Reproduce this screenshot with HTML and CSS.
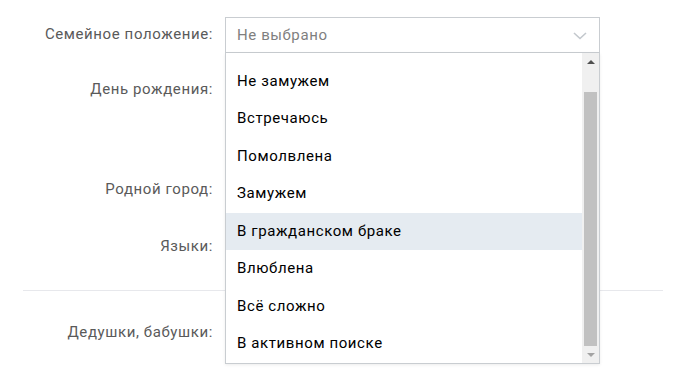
FILE: index.html
```html
<!DOCTYPE html>
<html lang="ru">
<head>
<meta charset="utf-8">
<link rel="stylesheet" href="styles.css">
</head>
<body>
<div class="form">
  <div class="row row-status">
    <div class="label">Семейное положение:</div>
    <div class="field">
      <div class="select">
        <span class="placeholder">Не выбрано</span>
        <svg class="chevron" width="14" height="8" viewBox="0 0 14 8"><path d="M1 1 L7 6.5 L13 1" fill="none" stroke="#c3c8cd" stroke-width="1.6"/></svg>
      </div>
      <div class="dropdown">
        <ul class="options">
          <li>Не замужем</li>
          <li>Встречаюсь</li>
          <li>Помолвлена</li>
          <li>Замужем</li>
          <li class="active">В гражданском браке</li>
          <li>Влюблена</li>
          <li>Всё сложно</li>
          <li>В активном поиске</li>
        </ul>
        <div class="scrollbar">
          <div class="sb-btn"><span class="tri up"></span></div>
          <div class="sb-track"><div class="sb-thumb"></div></div>
          <div class="sb-btn"><span class="tri down"></span></div>
        </div>
      </div>
    </div>
  </div>
  <div class="row row-birth">
    <div class="label">День рождения:</div>
  </div>
  <div class="row row-city">
    <div class="label">Родной город:</div>
  </div>
  <div class="row row-lang">
    <div class="label">Языки:</div>
  </div>
  <div class="divider"></div>
  <div class="row row-family">
    <div class="label">Дедушки, бабушки:</div>
  </div>
</div>
</body>
</html>
```
FILE: styles.css
```css
html, body {
  margin: 0;
  padding: 0;
  background: #fff;
}
body {
  font-family: Roboto, "Liberation Sans", sans-serif;
  font-size: 15px;
  letter-spacing: 0.6px;
  width: 679px;
  height: 371px;
  overflow: hidden;
}
.form {
  padding: 17px 16px 0 23px;
}
.row {
  display: flex;
  align-items: flex-start;
  gap: 12px;
}
.label {
  width: 190px;
  flex: none;
  text-align: right;
  color: #5a5a5a;
  line-height: 35px;
  height: 36px;
}
.field {
  position: relative;
  width: 375px;
}
.select {
  box-sizing: border-box;
  height: 36px;
  border: 1px solid #c9cdd1;
  display: flex;
  align-items: center;
  justify-content: space-between;
  padding: 0 12px 0 11px;
}
.placeholder {
  color: #7f7f7f;
  margin-top: -1px;
}
.chevron {
  display: block;
  margin-top: 1px;
}
.dropdown {
  position: absolute;
  top: 36px;
  left: 0;
  width: 375px;
  height: 311px;
  box-sizing: border-box;
  border: 1px solid #c9cdd1;
  border-top: none;
  background: #fff;
  display: flex;
  box-shadow: 0 1px 3px rgba(0, 0, 0, 0.08);
  z-index: 5;
}
.options {
  list-style: none;
  margin: 0;
  padding: 9.5px 0 0 0;
  flex: 1;
  overflow: hidden;
}
.options li {
  height: 37.5px;
  line-height: 37px;
  padding-left: 11px;
  color: #000;
}
.options li.active {
  background: #e5ebf1;
}
.scrollbar {
  width: 17px;
  flex: none;
  background: #f0f0f0;
  display: flex;
  flex-direction: column;
}
.sb-btn {
  height: 17px;
  flex: none;
  display: flex;
  align-items: center;
  justify-content: center;
}
.sb-track {
  flex: 1;
  display: flex;
  flex-direction: column;
  justify-content: flex-end;
}
.sb-thumb {
  height: 254px;
  margin: 0 2px;
  background: #c1c1c1;
}
.tri {
  width: 0;
  height: 0;
  border-left: 4px solid transparent;
  border-right: 4px solid transparent;
}
.tri.up {
  border-bottom: 4px solid #505050;
}
.tri.down {
  border-top: 4px solid #a3a3a3;
}
.row-birth {
  margin-top: 19px;
  height: 81px;
}
.row-city {
  margin-top: 19px;
}
.row-lang {
  margin-top: 21px;
}
.divider {
  margin-top: 25px;
  height: 1px;
  background: #e7e8ec;
}
.row-family {
  margin-top: 24px;
}
```
